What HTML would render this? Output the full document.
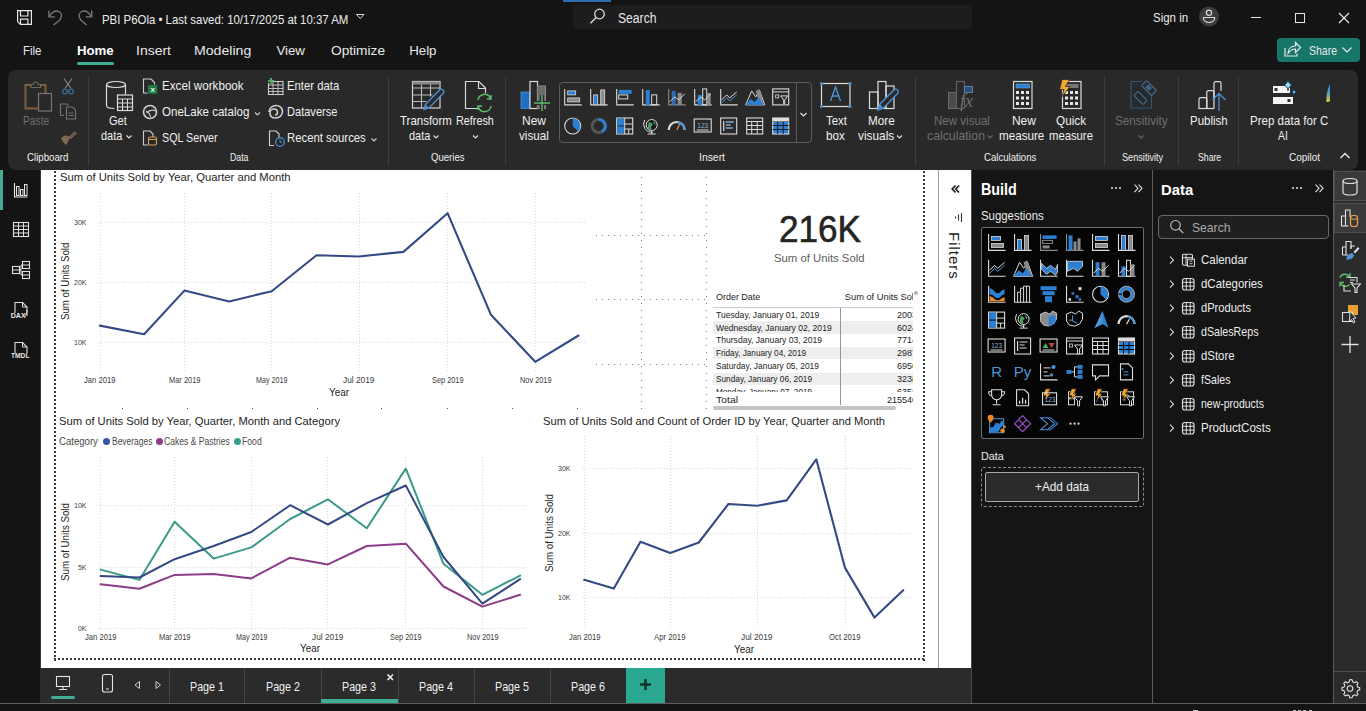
<!DOCTYPE html>
<html><head><meta charset="utf-8"><style>*{box-sizing:border-box;margin:0;padding:0}
html,body{width:1366px;height:711px;overflow:hidden;background:#141414;font-family:"Liberation Sans",sans-serif;color:#f2f2f2;position:relative;-webkit-font-smoothing:antialiased}
.a{position:absolute}
.t{position:absolute;white-space:pre;line-height:1}
svg{position:absolute;overflow:visible}
</style></head><body>
<svg style="left:10px;top:4px" width="90" height="26" viewBox="10 4 90 26"><path d="M17.6 10.6h13.8v13.8h-11l-2.8-2.8z" fill="none" stroke="#e6e6e6" stroke-width="1.2"/><path d="M20.5 10.6v5.4h7.4v-5.4M20.5 24.4v-5.2h7.4v5.2" fill="none" stroke="#e6e6e6" stroke-width="1.2"/>
<path d="M48.9 10.6v6.2h6" fill="none" stroke="#7a7a7a" stroke-width="1.3"/><path d="M49.3 16.4C51.5 13 54 11 56.5 11c3 0 5 2.2 5 4.8 0 1.8-.8 3-1.8 4.2L53.6 25" fill="none" stroke="#7a7a7a" stroke-width="1.3"/>
<path d="M91.7 10.6v6.2h-6" fill="none" stroke="#7a7a7a" stroke-width="1.3"/><path d="M91.3 16.4C89.1 13 86.6 11 84.1 11c-3 0-5 2.2-5 4.8 0 1.8.8 3 1.8 4.2L86.5 25" fill="none" stroke="#7a7a7a" stroke-width="1.3"/></svg>
<div class="t" style="left:102.3px;top:13.7px;font-size:12.86px;color:#ececec;transform:scaleX(0.8873);transform-origin:0 0;">PBI P6Ola • Last saved: 10/17/2025 at 10:37 AM</div>
<svg style="left:354px;top:12px" width="12" height="10" viewBox="354 12 12 10"><path d="M356.5 14.5h7.5l-3.75 4z" fill="none" stroke="#d8d8d8" stroke-width="1"/></svg>
<div class="a" style="left:563px;top:0px;width:48px;height:2px;background:#2f6db3;"></div>
<div class="a" style="left:573px;top:5px;width:399px;height:24px;background:#1d1d1d;border-radius:4px"></div>
<svg style="left:586px;top:6px" width="24" height="24" viewBox="586 6 24 24"><circle cx="599.5" cy="14" r="4.8" fill="none" stroke="#dcdcdc" stroke-width="1.3"/><path d="M596.2 17.5L590.5 23.2" stroke="#dcdcdc" stroke-width="1.4"/></svg>
<div class="t" style="left:618.4px;top:10.7px;font-size:14.29px;color:#e6e6e6;transform:scaleX(0.8508);transform-origin:0 0;">Search</div>
<div class="t" style="left:1153.2px;top:12.0px;font-size:12.86px;color:#ececec;transform:scaleX(0.8925);transform-origin:0 0;">Sign in</div>
<svg style="left:1197px;top:5px" width="24" height="24" viewBox="1197 5 24 24"><circle cx="1209" cy="16.5" r="10" fill="#3c3c3c"/><circle cx="1209" cy="12.8" r="2.6" fill="none" stroke="#dadada" stroke-width="1.2"/><path d="M1203.3 17.5h11.4c0 3-2.5 5-5.7 5s-5.7-2-5.7-5z" fill="none" stroke="#dadada" stroke-width="1.2"/></svg>
<div class="a" style="left:1251px;top:17px;width:10px;height:1px;background:#e6e6e6;"></div>
<div class="a" style="left:1295px;top:13px;width:10px;height:10px;background:transparent;border:1px solid #e6e6e6"></div>
<svg style="left:1336px;top:10px" width="16" height="16" viewBox="1336 10 16 16"><path d="M1339 13l10 10M1349 13l-10 10" stroke="#e6e6e6" stroke-width="1.2"/></svg>
<div class="t" style="left:23.4px;top:44.2px;font-size:13.29px;color:#e8e8e8;transform:scaleX(0.8642);transform-origin:0 0;">File</div>
<div class="t" style="left:77.3px;top:44.2px;font-size:13.29px;font-weight:700;color:#ffffff;transform:scaleX(0.9944);transform-origin:0 0;">Home</div>
<div class="t" style="left:136.2px;top:44.2px;font-size:13.29px;color:#e8e8e8;transform:scaleX(1.0536);transform-origin:0 0;">Insert</div>
<div class="t" style="left:194.3px;top:44.2px;font-size:13.29px;color:#e8e8e8;transform:scaleX(1.0630);transform-origin:0 0;">Modeling</div>
<div class="t" style="left:276.4px;top:44.2px;font-size:13.29px;color:#e8e8e8;">View</div>
<div class="t" style="left:330.6px;top:44.2px;font-size:13.29px;color:#e8e8e8;transform:scaleX(1.0304);transform-origin:0 0;">Optimize</div>
<div class="t" style="left:409.2px;top:44.2px;font-size:13.29px;color:#e8e8e8;">Help</div>
<div class="a" style="left:77px;top:62px;width:37px;height:3px;background:#3fae94;border-radius:1.5px"></div>
<div class="a" style="left:1277px;top:38px;width:83px;height:24px;background:#17766a;border-radius:4px"></div>
<svg style="left:1282px;top:40px" width="22" height="20" viewBox="1282 40 22 20"><path d="M1285 48v8h12v-2.5" fill="none" stroke="#e8e8e8" stroke-width="1.2"/><path d="M1288 53.5c0-4.5 3-7.5 7.5-7.5v-3.5l5 5-5 5v-3.5c-3.5 0-5.5 1.5-7.5 4.5z" fill="none" stroke="#e8e8e8" stroke-width="1.2"/></svg>
<div class="t" style="left:1308.5px;top:44.7px;font-size:12.86px;color:#e8e8e8;transform:scaleX(0.8157);transform-origin:0 0;">Share</div>
<svg style="left:1340px;top:44px" width="14" height="10" viewBox="1340 44 14 10"><path d="M1342.5 47.5l4.5 4.5 4.5-4.5" fill="none" stroke="#e8e8e8" stroke-width="1.2"/></svg>
<div class="a" style="left:0px;top:703px;width:1366px;height:1px;background:#5e5e5e;"></div>
<div class="a" style="left:8px;top:70px;width:1350px;height:99.5px;background:#292929;border-radius:8px"></div>
<div class="a" style="left:88px;top:77px;width:1px;height:88px;background:#3d3d3d;"></div>
<div class="a" style="left:388px;top:77px;width:1px;height:88px;background:#3d3d3d;"></div>
<div class="a" style="left:505px;top:77px;width:1px;height:88px;background:#3d3d3d;"></div>
<div class="a" style="left:915px;top:77px;width:1px;height:88px;background:#3d3d3d;"></div>
<div class="a" style="left:1104px;top:77px;width:1px;height:88px;background:#3d3d3d;"></div>
<div class="a" style="left:1178px;top:77px;width:1px;height:88px;background:#3d3d3d;"></div>
<div class="a" style="left:1238px;top:77px;width:1px;height:88px;background:#3d3d3d;"></div>
<div class="t" style="left:26.9px;top:152.4px;font-size:10.86px;color:#f0f0f0;transform:scaleX(0.8906);transform-origin:0 0;">Clipboard</div>
<div class="t" style="left:230.0px;top:152.4px;font-size:10.86px;color:#f0f0f0;transform:scaleX(0.8060);transform-origin:0 0;">Data</div>
<div class="t" style="left:430.8px;top:152.4px;font-size:10.86px;color:#f0f0f0;transform:scaleX(0.8809);transform-origin:0 0;">Queries</div>
<div class="t" style="left:698.5px;top:152.4px;font-size:10.86px;color:#f0f0f0;transform:scaleX(0.9569);transform-origin:0 0;">Insert</div>
<div class="t" style="left:983.8px;top:152.4px;font-size:10.86px;color:#f0f0f0;transform:scaleX(0.8841);transform-origin:0 0;">Calculations</div>
<div class="t" style="left:1121.5px;top:152.4px;font-size:10.86px;color:#f0f0f0;transform:scaleX(0.8427);transform-origin:0 0;">Sensitivity</div>
<div class="t" style="left:1197.7px;top:152.4px;font-size:10.86px;color:#f0f0f0;transform:scaleX(0.8004);transform-origin:0 0;">Share</div>
<div class="t" style="left:1288.8px;top:152.4px;font-size:10.86px;color:#f0f0f0;transform:scaleX(0.9168);transform-origin:0 0;">Copilot</div>
<svg style="left:20px;top:76px" width="40" height="40" viewBox="20 76 40 40"><path d="M31 85h-5.5v23.5h12.5M40 85h5.5v8" fill="none" stroke="#7d6034" stroke-width="2"/>
<path d="M31 87.5v-3h2.2c.3-1.6 1.2-2.5 2.5-2.5s2.2.9 2.5 2.5H40.5v3z" fill="none" stroke="#6f6a62" stroke-width="1.2"/>
<rect x="38.5" y="93.5" width="13" height="17.5" fill="#292929" stroke="#777" stroke-width="1.2"/></svg>
<div class="t" style="left:22.8px;top:114.7px;font-size:12.43px;color:#6f6f6f;transform:scaleX(0.8248);transform-origin:0 0;">Paste</div>
<svg style="left:58px;top:76px" width="20" height="72" viewBox="58 76 20 72"><path d="M64 78.5l7 10M72 78.5l-7 10" stroke="#8a8a8a" stroke-width="1.1"/>
<circle cx="65" cy="91.5" r="2.3" fill="none" stroke="#3e6a8c" stroke-width="1.3"/><circle cx="71" cy="91.5" r="2.3" fill="none" stroke="#3e6a8c" stroke-width="1.3"/>
<path d="M64 115.5h-3.5v-11.5h6.5l1.5 1.5" fill="none" stroke="#747474" stroke-width="1.1"/><path d="M66.5 107h6l3 3v9h-9z M68.5 113h5M68.5 115.5h5" fill="none" stroke="#747474" stroke-width="1.1"/>
<path d="M69.5 137.5l5-5.5 1.5 1.5-5.5 5z" fill="none" stroke="#7d6a52" stroke-width="1.2"/><path d="M61 138c3-3 6-3.5 9-1l-3.5 8c-2.5-1.5-4.5-4-5.5-7z" fill="#7d6a52"/></svg>
<svg style="left:100px;top:76px" width="40" height="40" viewBox="100 76 40 40"><ellipse cx="116" cy="84.5" rx="9.5" ry="3" fill="none" stroke="#dcdcdc" stroke-width="1.2"/>
<path d="M106.5 84.5v21c0 1.7 3.5 3 8 3" fill="none" stroke="#dcdcdc" stroke-width="1.2"/><path d="M125.5 84.5v10" fill="none" stroke="#dcdcdc" stroke-width="1.2"/>
<rect x="117.5" y="95" width="15" height="15.5" fill="#292929" stroke="#dcdcdc" stroke-width="1.2"/>
<path d="M117.5 99h15M117.5 103h15M117.5 107h15M122.5 99v11.5M127.5 99v11.5" stroke="#dcdcdc" stroke-width="1"/></svg>
<div class="t" style="left:108.6px;top:115.1px;font-size:12.86px;color:#f0f0f0;transform:scaleX(0.8537);transform-origin:0 0;">Get</div>
<div class="t" style="left:100.9px;top:130.1px;font-size:12.86px;color:#f0f0f0;transform:scaleX(0.8549);transform-origin:0 0;">data</div>
<svg style="left:124px;top:133px" width="10" height="8" viewBox="124 133 10 8"><path d="M126.5 135.5l2.5 2.5 2.5-2.5" fill="none" stroke="#e0e0e0" stroke-width="1.1"/></svg>
<svg style="left:140px;top:76px" width="22" height="74" viewBox="140 76 22 74"><path d="M151 79h-7.5v14h4M151 79l3.5 3.5v2" fill="none" stroke="#cfcfcf" stroke-width="1.1"/>
<rect x="148" y="85" width="9.3" height="8.8" fill="#1f7a45"/><text x="152.7" y="92.3" font-family="Liberation Sans" font-weight="bold" font-size="8" fill="#e8f5e8" text-anchor="middle">x</text>
<circle cx="150" cy="112" r="6.5" fill="none" stroke="#cfcfcf" stroke-width="1.6"/><path d="M146 111c2 1 4 3 4.5 6M146.5 113c3-3 6-3.5 9-2" fill="none" stroke="#cfcfcf" stroke-width="1.1"/>
<path d="M150 131h-6.5v14h4.5M150 131l3 3v3" fill="none" stroke="#cfcfcf" stroke-width="1.1"/><rect x="148.5" y="137" width="8" height="8" rx="1.5" fill="none" stroke="#d8a35c" stroke-width="1.1"/><path d="M148.5 139.5h8" stroke="#d8a35c" stroke-width="1"/></svg>
<div class="t" style="left:161.5px;top:80.1px;font-size:12.86px;color:#f0f0f0;transform:scaleX(0.9071);transform-origin:0 0;">Excel workbook</div>
<div class="t" style="left:161.5px;top:106.2px;font-size:12.86px;color:#f0f0f0;transform:scaleX(0.8989);transform-origin:0 0;">OneLake catalog</div>
<svg style="left:252px;top:110px" width="10" height="8" viewBox="252 110 10 8"><path d="M255 112.5l2.5 2.5 2.5-2.5" fill="none" stroke="#d0d0d0" stroke-width="1.1"/></svg>
<div class="t" style="left:161.5px;top:131.9px;font-size:12.86px;color:#f0f0f0;transform:scaleX(0.8335);transform-origin:0 0;">SQL Server</div>
<svg style="left:265px;top:76px" width="22" height="74" viewBox="265 76 22 74"><rect x="268.5" y="81.5" width="14.5" height="13" fill="none" stroke="#cfcfcf" stroke-width="1.1"/><path d="M268.5 85h14.5M268.5 88.5h14.5M268.5 91.5h14.5M273 81.5v13M278 81.5v13" stroke="#cfcfcf" stroke-width="0.9"/>
<path d="M271 78v6M268 81h6" stroke="#5bbf6a" stroke-width="1.3"/><rect x="268" y="80" width="4" height="3" fill="#292929"/><path d="M271 78v6M268 81h6" stroke="#5bbf6a" stroke-width="1.3"/>
<path d="M269 112c0-4 3.5-6.5 7-6.5s6.5 2.5 6.5 6-3 6.5-7 6.5-5.5-2.5-5.5-5 2-4 4-4 3.5 1.5 3.5 3.5-1.5 2.5-2.5 2.5" fill="none" stroke="#cfcfcf" stroke-width="1.6"/>
<path d="M276 131h-6.5v14.5h4.5M276 131l3 3v4" fill="none" stroke="#cfcfcf" stroke-width="1.1"/><circle cx="280" cy="142" r="4.3" fill="#292929" stroke="#4f93d1" stroke-width="1.2"/><path d="M280 139.5v2.7h2" fill="none" stroke="#4f93d1" stroke-width="1"/></svg>
<div class="t" style="left:287.0px;top:80.1px;font-size:12.86px;color:#f0f0f0;transform:scaleX(0.8796);transform-origin:0 0;">Enter data</div>
<div class="t" style="left:287.0px;top:106.2px;font-size:12.86px;color:#f0f0f0;transform:scaleX(0.8599);transform-origin:0 0;">Dataverse</div>
<div class="t" style="left:287.0px;top:131.9px;font-size:12.86px;color:#f0f0f0;transform:scaleX(0.8818);transform-origin:0 0;">Recent sources</div>
<svg style="left:368px;top:136px" width="10" height="8" viewBox="368 136 10 8"><path d="M371.5 138.5l2.5 2.5 2.5-2.5" fill="none" stroke="#d0d0d0" stroke-width="1.1"/></svg>
<svg style="left:408px;top:78px" width="40" height="36" viewBox="408 78 40 36"><rect x="412.5" y="81.5" width="27.5" height="26.5" fill="none" stroke="#d8d8d8" stroke-width="1.2"/><rect x="412.5" y="81.5" width="27.5" height="3" fill="#8a8a8a"/>
<path d="M412.5 88h27.5M412.5 95h20M412.5 101.5h14M421.5 84.5v23.5M430.5 84.5v12" stroke="#bdbdbd" stroke-width="1.1"/>
<path d="M424 109.5l1.5-5 14-14.5c1-1 2.5-1 3.5 0s1 2.5 0 3.5l-14 14.5z" fill="#292929" stroke="#4f8fd0" stroke-width="1.4"/><path d="M424 109.5l1.5-5 3.5 3.5z" fill="#4f8fd0"/></svg>
<div class="t" style="left:399.5px;top:115.1px;font-size:12.86px;color:#f0f0f0;transform:scaleX(0.8929);transform-origin:0 0;">Transform</div>
<div class="t" style="left:408.9px;top:130.1px;font-size:12.86px;color:#f0f0f0;transform:scaleX(0.8509);transform-origin:0 0;">data</div>
<svg style="left:430px;top:133px" width="10" height="8" viewBox="430 133 10 8"><path d="M433.5 135.5l2.5 2.5 2.5-2.5" fill="none" stroke="#e0e0e0" stroke-width="1.1"/></svg>
<svg style="left:462px;top:78px" width="32" height="36" viewBox="462 78 32 36"><path d="M479 108.5h-13.5v-27h13.5l6.5 6.5v5" fill="none" stroke="#d8d8d8" stroke-width="1.2"/><path d="M478.5 81.5v7h7" fill="none" stroke="#d8d8d8" stroke-width="1.2"/>
<path d="M478 100a6.5 6.5 0 0 1 12.5-1.5M491 106a6.5 6.5 0 0 1-12.5 1.5" fill="none" stroke="#5cc06e" stroke-width="1.5"/><path d="M491 95v4h-4M478 110v-4h4" fill="none" stroke="#5cc06e" stroke-width="1.5"/></svg>
<div class="t" style="left:456.4px;top:115.1px;font-size:12.86px;color:#f0f0f0;transform:scaleX(0.8394);transform-origin:0 0;">Refresh</div>
<svg style="left:470px;top:133px" width="10" height="8" viewBox="470 133 10 8"><path d="M473 135.5l2.5 2.5 2.5-2.5" fill="none" stroke="#e0e0e0" stroke-width="1.1"/></svg>
<svg style="left:518px;top:78px" width="36" height="36" viewBox="518 78 36 36"><rect x="521" y="92" width="8.5" height="16.5" fill="#1f6fc5" stroke="#4f8fd0" stroke-width="0.8"/><rect x="530" y="81.5" width="7.5" height="27" fill="none" stroke="#dcdcdc" stroke-width="1.2"/>
<rect x="537.5" y="86" width="8" height="22.5" fill="#6a6a6a" stroke="#8a8a8a" stroke-width="1"/><path d="M534 103h16M542 95v16" stroke="#292929" stroke-width="4"/><path d="M534 103h16M542 95v16" stroke="#5cc06e" stroke-width="1.4"/></svg>
<div class="t" style="left:522.0px;top:115.1px;font-size:12.86px;color:#f0f0f0;transform:scaleX(0.9326);transform-origin:0 0;">New</div>
<div class="t" style="left:519.2px;top:130.1px;font-size:12.86px;color:#f0f0f0;transform:scaleX(0.9060);transform-origin:0 0;">visual</div>
<div class="a" style="left:558.5px;top:81.5px;width:253.5px;height:61px;background:transparent;border:1px solid #5c5c5c;border-radius:4px"></div>
<div class="a" style="left:795.5px;top:82px;width:1px;height:60px;background:#5c5c5c;"></div>
<svg style="left:798px;top:111px" width="12" height="8" viewBox="798 111 12 8"><path d="M800.5 113l3 3 3-3" fill="none" stroke="#e0e0e0" stroke-width="1.2"/></svg>
<svg style="left:560px;top:83px" width="236" height="58" viewBox="560 83 236 58"><path d="M564.7 88.9v16h17" fill="none" stroke="#dcdcdc" stroke-width="1.1"/><rect x="567.7" y="90.9" width="8" height="4" fill="#2d7fd2" stroke="#dcdcdc" stroke-width="0.8"/><rect x="567.7" y="97.9" width="12" height="4" fill="#8a8a8a" stroke="#dcdcdc" stroke-width="0.8"/><path d="M590.7 88.9v16h17" fill="none" stroke="#dcdcdc" stroke-width="1.1"/><rect x="593.7" y="94.9" width="4" height="10" fill="#2d7fd2" stroke="#dcdcdc" stroke-width="0.8"/><rect x="600.7" y="89.9" width="4" height="15" fill="#8a8a8a" stroke="#dcdcdc" stroke-width="0.8"/><path d="M616.7 88.9v16h17" fill="none" stroke="#dcdcdc" stroke-width="1.1"/><rect x="618.7" y="89.9" width="13" height="4" fill="#2d7fd2"/><rect x="618.7" y="94.9" width="9" height="4" fill="none" stroke="#dcdcdc" stroke-width="1"/><path d="M642.7 88.9v16h17" fill="none" stroke="#dcdcdc" stroke-width="1.1"/><rect x="645.7" y="89.9" width="4" height="15" fill="#2d7fd2"/><rect x="651.7" y="94.9" width="5" height="10" fill="none" stroke="#dcdcdc" stroke-width="1"/><path d="M668.7 88.9v16h17" fill="none" stroke="#8a8a8a" stroke-width="1.1"/><rect x="671.7" y="90.9" width="4" height="14" fill="#2d7fd2" opacity=".8"/><rect x="677.7" y="92.9" width="4" height="12" fill="#8a8a8a"/><path d="M669.7 101.9l5-5 4 3 6-6" fill="none" stroke="#dcdcdc" stroke-width="1"/><path d="M694.7 88.9v16h17" fill="none" stroke="#dcdcdc" stroke-width="1.1"/><rect x="697.7" y="94.9" width="4" height="10" fill="#2d7fd2"/><rect x="702.7" y="88.9" width="4" height="16" fill="none" stroke="#dcdcdc" stroke-width="1"/><rect x="706.7" y="92.9" width="4" height="12" fill="#8a8a8a"/><path d="M695.7 101.9l5-5 4 3 6-6" fill="none" stroke="#dcdcdc" stroke-width="1"/><path d="M720.7 88.9v16h17" fill="none" stroke="#dcdcdc" stroke-width="1.1"/><path d="M721.7 99.9l5-5 3 3 7-6" fill="none" stroke="#dcdcdc" stroke-width="1"/><path d="M721.7 102.9l5-5 3 3 7-6" fill="none" stroke="#4f93d1" stroke-width="1"/><path d="M745.7 104.9l6-14 4 6 4-6 5 14z" fill="none" stroke="#dcdcdc" stroke-width="1"/><path d="M755.7 90.9l4-2 4 16h-4z" fill="#8a8a8a"/><path d="M745.7 104.9l5-6 4 3 4-5 5 8z" fill="#2d7fd2"/><rect x="772.7" y="88.9" width="16" height="16" fill="none" stroke="#dcdcdc" stroke-width="1.1"/><path d="M772.7 91.9h16" stroke="#dcdcdc" stroke-width="1"/><rect x="775.7" y="94.9" width="3" height="3" fill="none" stroke="#dcdcdc" stroke-width=".8"/><path d="M780.7 95.9h7l-3 4v4h-1v-4z" fill="#292929" stroke="#dcdcdc" stroke-width="1"/><circle cx="572.7" cy="126" r="8" fill="none" stroke="#dcdcdc" stroke-width="1.1"/><path d="M572.7 118.5A7.5 7.5 0 0 1 578.0 131.3L572.7 126z" fill="#2d7fd2"/><circle cx="598.7" cy="126" r="6.5" fill="none" stroke="#555" stroke-width="3"/><path d="M598.7 119.5A6.5 6.5 0 0 1 601.7 131.8" fill="none" stroke="#2d7fd2" stroke-width="3"/><rect x="616.7" y="118" width="16" height="16" fill="none" stroke="#dcdcdc" stroke-width="1.1"/><rect x="617.2" y="118.5" width="7" height="7" fill="#2d7fd2"/><rect x="617.2" y="126.5" width="7" height="7" fill="#2d7fd2"/><path d="M624.7 118v16M624.7 124h8M624.7 129h8M628.7 129v5" stroke="#dcdcdc" stroke-width="1"/><circle cx="651.7" cy="125" r="5.5" fill="#1a1a1a" stroke="#dcdcdc" stroke-width="1"/><path d="M648.7 122l3 1 1 2-2 2 1 2-2 1-2-2z M652.7 121l3 2-1 2z" fill="#4aa060"/><path d="M644.7 120a8 8 0 0 0 8 12M651.7 131v3M647.7 134h8" fill="none" stroke="#dcdcdc" stroke-width="1"/><path d="M668.7 130a8 8 0 0 1 16 0" fill="none" stroke="#dcdcdc" stroke-width="2.2"/><path d="M677.7 122.2a8 8 0 0 1 7 7.8" fill="none" stroke="#4f93d1" stroke-width="2.2"/><path d="M676.7 130l3-6" stroke="#e0a040" stroke-width="1.2"/><rect x="694.2" y="119" width="17" height="13" fill="none" stroke="#dcdcdc" stroke-width="1.1"/><path d="M696.7 130h12" stroke="#dcdcdc" stroke-width="1"/><text x="702.7" y="127.5" font-family="Liberation Sans" font-size="6.5" fill="#8fb4dc" text-anchor="middle">123</text><rect x="720.7" y="118" width="16" height="16" fill="none" stroke="#dcdcdc" stroke-width="1.1"/><path d="M723.7 121v10M725.7 122h8M725.7 125h5M725.7 128h7" stroke="#dcdcdc" stroke-width="1.2"/><path d="M725.7 122h8M725.7 128h7" stroke="#4f93d1" stroke-width="1.2"/><rect x="746.7" y="118" width="16" height="16" fill="none" stroke="#dcdcdc" stroke-width="1.1"/><path d="M746.7 121.5h16M746.7 125.5h16M746.7 129.5h16M751.7 121.5v12.5M757.2 121.5v12.5" stroke="#dcdcdc" stroke-width="1"/><rect x="772.7" y="118" width="16" height="16" fill="#2d7fd2" stroke="#dcdcdc" stroke-width="1.1"/><path d="M772.7 121.5h16M772.7 125.5h16M772.7 129.5h16M777.7 121.5v12.5M783.2 121.5v12.5" stroke="#1a1a1a" stroke-width="1"/><rect x="772.7" y="118" width="16" height="3.5" fill="#dcdcdc"/></svg>
<svg style="left:818px;top:78px" width="36" height="36" viewBox="818 78 36 36"><rect x="821.5" y="83.5" width="28.5" height="23" fill="none" stroke="#dcdcdc" stroke-width="1.2"/>
<circle cx="821.5" cy="83.5" r="1.6" fill="#4f8fd0"/><circle cx="850" cy="83.5" r="1.6" fill="#4f8fd0"/><circle cx="821.5" cy="106.5" r="1.6" fill="#4f8fd0"/><circle cx="850" cy="106.5" r="1.6" fill="#4f8fd0"/>
<path d="M830.5 101l5-14 5 14M832.5 96h6" fill="none" stroke="#4f93d1" stroke-width="1.4"/></svg>
<div class="t" style="left:826.4px;top:115.1px;font-size:12.86px;color:#f0f0f0;transform:scaleX(0.8858);transform-origin:0 0;">Text</div>
<div class="t" style="left:826.4px;top:130.1px;font-size:12.86px;color:#f0f0f0;transform:scaleX(0.9067);transform-origin:0 0;">box</div>
<svg style="left:866px;top:78px" width="36" height="36" viewBox="866 78 36 36"><rect x="869.5" y="92" width="8.5" height="16.5" fill="none" stroke="#dcdcdc" stroke-width="1.2"/><rect x="878" y="81.5" width="8" height="27" fill="none" stroke="#dcdcdc" stroke-width="1.2"/><rect x="886" y="86" width="8" height="22.5" fill="none" stroke="#dcdcdc" stroke-width="1.2"/>
<path d="M878 110l2-6 14-14c1-1 2.5-1 3.5 0s1 2.5 0 3.5L883.5 108z" fill="#292929" stroke="#4f8fd0" stroke-width="1.4"/><path d="M878 110l2-6 3.5 4z" fill="#4f8fd0"/></svg>
<div class="t" style="left:868.4px;top:115.1px;font-size:12.86px;color:#f0f0f0;transform:scaleX(0.9109);transform-origin:0 0;">More</div>
<div class="t" style="left:858.0px;top:130.1px;font-size:12.86px;color:#f0f0f0;transform:scaleX(0.9208);transform-origin:0 0;">visuals</div>
<svg style="left:894px;top:133px" width="10" height="8" viewBox="894 133 10 8"><path d="M897 135.5l2.5 2.5 2.5-2.5" fill="none" stroke="#e0e0e0" stroke-width="1.1"/></svg>
<svg style="left:945px;top:78px" width="36" height="36" viewBox="945 78 36 36"><rect x="948.5" y="92.5" width="8" height="16" fill="#4a4a4a" stroke="#6a6a6a" stroke-width="1"/><rect x="956.5" y="81.5" width="8" height="27" fill="none" stroke="#626262" stroke-width="1.2"/><rect x="964.5" y="86.5" width="8" height="6" fill="#2a4f78" stroke="#5a80a8" stroke-width="1"/>
<text x="960" y="107" font-family="Liberation Serif" font-style="italic" font-size="18" fill="#707070" stroke="#292929" stroke-width="0.6" paint-order="stroke">fx</text></svg>
<div class="t" style="left:933.5px;top:115.1px;font-size:12.86px;color:#6f6f6f;transform:scaleX(0.8989);transform-origin:0 0;">New visual</div>
<div class="t" style="left:926.6px;top:130.1px;font-size:12.86px;color:#6f6f6f;transform:scaleX(0.9545);transform-origin:0 0;">calculation</div>
<svg style="left:985px;top:133px" width="10" height="8" viewBox="985 133 10 8"><path d="M987.5 135.5l2.5 2.5 2.5-2.5" fill="none" stroke="#6a6a6a" stroke-width="1.1"/></svg>
<svg style="left:1010px;top:78px" width="80" height="36" viewBox="1010 78 80 36"><rect x="1013.5" y="81.5" width="18.5" height="27" fill="none" stroke="#dcdcdc" stroke-width="1.2"/><rect x="1016" y="84" width="13.5" height="4" fill="#2d7fd2" stroke="#6aa8e4" stroke-width="0.6"/>
<g fill="#e6e6e6"><rect x="1016" y="91" width="3" height="3"/><rect x="1021" y="91" width="3" height="3"/><rect x="1026" y="91" width="3" height="3"/><rect x="1016" y="96.5" width="3" height="3"/><rect x="1021" y="96.5" width="3" height="3"/><rect x="1026" y="96.5" width="3" height="3"/><rect x="1016" y="102" width="3" height="3"/><rect x="1021" y="102" width="3" height="3"/><rect x="1026" y="102" width="3" height="3"/></g>
<rect x="1062.5" y="81.5" width="18.5" height="27" fill="none" stroke="#dcdcdc" stroke-width="1.2"/><rect x="1065" y="84" width="13.5" height="4" fill="#777"/>
<g fill="#e6e6e6"><rect x="1065" y="91" width="3" height="3"/><rect x="1070" y="91" width="3" height="3"/><rect x="1075" y="91" width="3" height="3"/><rect x="1065" y="96.5" width="3" height="3"/><rect x="1070" y="96.5" width="3" height="3"/><rect x="1075" y="96.5" width="3" height="3"/><rect x="1065" y="102" width="3" height="3"/><rect x="1070" y="102" width="3" height="3"/><rect x="1075" y="102" width="3" height="3"/></g>
<path d="M1062 79.5h7.5l-4 7h4.5l-8.5 11 2.5-8h-4.5z" fill="#f0a830" stroke="#292929" stroke-width="0.8"/></svg>
<div class="t" style="left:1011.5px;top:115.1px;font-size:12.86px;color:#f0f0f0;transform:scaleX(0.9287);transform-origin:0 0;">New</div>
<div class="t" style="left:999.0px;top:130.1px;font-size:12.86px;color:#f0f0f0;transform:scaleX(0.9054);transform-origin:0 0;">measure</div>
<div class="t" style="left:1056.4px;top:115.1px;font-size:12.86px;color:#f0f0f0;transform:scaleX(0.9125);transform-origin:0 0;">Quick</div>
<div class="t" style="left:1049.3px;top:130.1px;font-size:12.86px;color:#f0f0f0;transform:scaleX(0.8775);transform-origin:0 0;">measure</div>
<svg style="left:1128px;top:76px" width="36" height="36" viewBox="1128 76 36 36"><path d="M1142 81.5h-11v26.5h20.5v-14" fill="none" stroke="#2f5878" stroke-width="1.2"/>
<rect x="1134" y="95" width="13" height="6" rx="1.5" transform="rotate(45 1140.5 98)" fill="none" stroke="#3d6a8e" stroke-width="1.2"/>
<rect x="1142" y="84.5" width="14" height="7" rx="1" transform="rotate(45 1149 88)" fill="#292929" stroke="#3d6a8e" stroke-width="1.2"/><rect x="1146" y="86" width="5" height="4" transform="rotate(45 1149 88)" fill="#3d6a8e"/></svg>
<div class="t" style="left:1115.4px;top:115.1px;font-size:12.86px;color:#6f6f6f;transform:scaleX(0.9103);transform-origin:0 0;">Sensitivity</div>
<svg style="left:1136px;top:133px" width="10" height="8" viewBox="1136 133 10 8"><path d="M1138.5 135.5l2.5 2.5 2.5-2.5" fill="none" stroke="#6a6a6a" stroke-width="1.1"/></svg>
<svg style="left:1195px;top:78px" width="36" height="36" viewBox="1195 78 36 36"><path d="M1199 108.5v-9c0-1 .8-1.8 1.8-1.8h4.2c1 0 1.8.8 1.8 1.8v9z" fill="none" stroke="#dcdcdc" stroke-width="1.2"/>
<path d="M1206.8 108.5v-16c0-1 .8-1.8 1.8-1.8h3.6c1 0 1.8.8 1.8 1.8v16" fill="none" stroke="#dcdcdc" stroke-width="1.2"/>
<path d="M1214 98v-14.5c0-1 .8-1.8 1.8-1.8h3.4c1 0 1.8.8 1.8 1.8v7.5" fill="none" stroke="#dcdcdc" stroke-width="1.2"/><path d="M1199 108.5h15" stroke="#dcdcdc" stroke-width="1.2"/>
<path d="M1219 111v-17M1212.5 100l6.5-6.5 6.5 6.5" fill="none" stroke="#4f8fd0" stroke-width="1.3"/></svg>
<div class="t" style="left:1189.7px;top:115.1px;font-size:12.86px;color:#f0f0f0;transform:scaleX(0.8936);transform-origin:0 0;">Publish</div>
<svg style="left:1270px;top:78px" width="36" height="30" viewBox="1270 78 36 30"><rect x="1273" y="86" width="17" height="7" fill="#f4f4f4"/><rect x="1273" y="97" width="20" height="7" fill="#f4f4f4"/><rect x="1274.5" y="88" width="3" height="3" fill="#333"/><rect x="1287.5" y="99" width="3" height="3" fill="#333"/>
<path d="M1288 79.5c.6 3.3 1.8 4.8 5 5.5-3.2.7-4.4 2.2-5 5.5-.6-3.3-1.8-4.8-5-5.5 3.2-.7 4.4-2.2 5-5.5z" fill="#9ad8f8" stroke="#0e3550" stroke-width="1"/><path d="M1294 89c.4 1.8 1 2.5 2.6 2.9-1.6.4-2.2 1.1-2.6 2.9-.4-1.8-1-2.5-2.6-2.9 1.6-.4 2.2-1.1 2.6-2.9z" fill="#6ec0f2" stroke="#0e3550" stroke-width=".8"/></svg>
<div class="t" style="left:1249.9px;top:115.1px;font-size:12.86px;color:#f0f0f0;transform:scaleX(0.8979);transform-origin:0 0;">Prep data for C</div>
<div class="t" style="left:1278.3px;top:130.1px;font-size:12.86px;color:#f0f0f0;transform:scaleX(0.8062);transform-origin:0 0;">AI</div>
<svg style="left:1322px;top:82px" width="12" height="22" viewBox="1322 82 12 22"><defs><linearGradient id="cp" x1="0" y1="0" x2="0" y2="1"><stop offset="0" stop-color="#2f8de0"/><stop offset="0.5" stop-color="#4aa0c0"/><stop offset="1" stop-color="#e8d030"/></linearGradient></defs><path d="M1330 84c-2 4-4 10-3.5 18 1.5 0 3 -.5 3.5-1z" fill="url(#cp)"/></svg>
<svg style="left:1338px;top:151px" width="14" height="10" viewBox="1338 151 14 10"><path d="M1340.5 158l4.5-4.5 4.5 4.5" fill="none" stroke="#e6e6e6" stroke-width="1.5"/></svg>
<div class="a" style="left:40px;top:170px;width:899px;height:498px;background:#ffffff;"></div>
<div class="a" style="left:40px;top:170px;width:1px;height:498px;background:#3a3a3a;"></div>
<div class="a" style="left:938px;top:170px;width:1px;height:498px;background:#a0a0a0;"></div>
<div class="a" style="left:939px;top:170px;width:32px;height:498px;background:#ffffff;"></div>
<div class="t" style="left:59.5px;top:172.0px;font-size:10.86px;color:#252423;transform:scaleX(1.0352);transform-origin:0 0;">Sum of Units Sold by Year, Quarter and Month</div>
<div class="a" style="left:98px;top:222px;width:489px;height:1px;background:repeating-linear-gradient(90deg,#d9d9d9 0 1px,transparent 1px 3px)"></div>
<div class="a" style="left:98px;top:282px;width:489px;height:1px;background:repeating-linear-gradient(90deg,#d9d9d9 0 1px,transparent 1px 3px)"></div>
<div class="a" style="left:98px;top:342px;width:489px;height:1px;background:repeating-linear-gradient(90deg,#d9d9d9 0 1px,transparent 1px 3px)"></div>
<div class="a" style="left:100px;top:193px;width:1px;height:180px;background:repeating-linear-gradient(180deg,#d9d9d9 0 1px,transparent 1px 3px)"></div>
<div class="a" style="left:184px;top:193px;width:1px;height:180px;background:repeating-linear-gradient(180deg,#d9d9d9 0 1px,transparent 1px 3px)"></div>
<div class="a" style="left:271px;top:193px;width:1px;height:180px;background:repeating-linear-gradient(180deg,#d9d9d9 0 1px,transparent 1px 3px)"></div>
<div class="a" style="left:359px;top:193px;width:1px;height:180px;background:repeating-linear-gradient(180deg,#d9d9d9 0 1px,transparent 1px 3px)"></div>
<div class="a" style="left:447px;top:193px;width:1px;height:180px;background:repeating-linear-gradient(180deg,#d9d9d9 0 1px,transparent 1px 3px)"></div>
<div class="a" style="left:535px;top:193px;width:1px;height:180px;background:repeating-linear-gradient(180deg,#d9d9d9 0 1px,transparent 1px 3px)"></div>
<div class="t" style="left:73.5px;top:218.7px;font-size:8.0px;color:#3c3c3c;transform:scaleX(0.8782);transform-origin:0 0;">30K</div>
<div class="t" style="left:73.5px;top:278.7px;font-size:8.0px;color:#3c3c3c;transform:scaleX(0.8782);transform-origin:0 0;">20K</div>
<div class="t" style="left:73.5px;top:339.1px;font-size:8.0px;color:#3c3c3c;transform:scaleX(0.8782);transform-origin:0 0;">10K</div>
<div class="t" style="left:84.2px;top:375.8px;font-size:8.57px;color:#3c3c3c;transform:scaleX(0.8940);transform-origin:0 0;">Jan 2019</div>
<div class="t" style="left:168.6px;top:375.8px;font-size:8.57px;color:#3c3c3c;transform:scaleX(0.8705);transform-origin:0 0;">Mar 2019</div>
<div class="t" style="left:256.0px;top:375.8px;font-size:8.57px;color:#3c3c3c;transform:scaleX(0.8376);transform-origin:0 0;">May 2019</div>
<div class="t" style="left:343.3px;top:375.8px;font-size:8.57px;color:#3c3c3c;transform:scaleX(0.9730);transform-origin:0 0;">Jul 2019</div>
<div class="t" style="left:432.1px;top:375.8px;font-size:8.57px;color:#3c3c3c;transform:scaleX(0.8590);transform-origin:0 0;">Sep 2019</div>
<div class="t" style="left:519.5px;top:375.8px;font-size:8.57px;color:#3c3c3c;transform:scaleX(0.8593);transform-origin:0 0;">Nov 2019</div>
<div class="t" style="left:329.0px;top:387.1px;font-size:11.43px;color:#252423;transform:scaleX(0.8666);transform-origin:0 0;">Year</div>
<div class="t" style="left:60.8px;top:320.0px;font-size:10.0px;color:#252423;transform:rotate(-90deg) scaleX(0.967);transform-origin:0 0;">Sum of Units Sold</div>
<svg style="left:40px;top:170px" width="899" height="498" viewBox="40 170 899 498"><polyline points="99.9,325.6 144.1,334.2 184.4,290.6 229.2,301.4 271.7,291.2 316.5,255.3 358.8,256.5 403.4,251.9 447.6,213.2 490.9,314.7 535.2,361.8 578.5,335.5" fill="none" stroke="#354a85" stroke-width="2.1" stroke-linejoin="round" stroke-linecap="round"/></svg>
<div class="a" style="left:641px;top:177px;width:1px;height:234px;background:repeating-linear-gradient(180deg,#7a7a7a 0 1px,transparent 1px 7px)"></div>
<div class="a" style="left:706px;top:177px;width:1px;height:234px;background:repeating-linear-gradient(180deg,#7a7a7a 0 1px,transparent 1px 7px)"></div>
<div class="a" style="left:596px;top:235px;width:110px;height:1px;background:repeating-linear-gradient(90deg,#7a7a7a 0 1px,transparent 1px 6px)"></div>
<div class="a" style="left:596px;top:299px;width:110px;height:1px;background:repeating-linear-gradient(90deg,#7a7a7a 0 1px,transparent 1px 6px)"></div>
<div class="a" style="left:596px;top:364px;width:110px;height:1px;background:repeating-linear-gradient(90deg,#7a7a7a 0 1px,transparent 1px 6px)"></div>
<div class="a" style="left:121.5px;top:408px;width:1px;height:1px;background:#555;"></div>
<div class="a" style="left:186.5px;top:408px;width:1px;height:1px;background:#555;"></div>
<div class="a" style="left:251.5px;top:408px;width:1px;height:1px;background:#555;"></div>
<div class="a" style="left:316.5px;top:408px;width:1px;height:1px;background:#555;"></div>
<div class="a" style="left:381px;top:408px;width:1px;height:1px;background:#555;"></div>
<div class="a" style="left:447px;top:408px;width:1px;height:1px;background:#555;"></div>
<div class="a" style="left:512px;top:408px;width:1px;height:1px;background:#555;"></div>
<div class="a" style="left:577px;top:408px;width:1px;height:1px;background:#555;"></div>
<div class="t" style="left:778.8px;top:212.1px;font-size:36.14px;color:#252423;transform:scaleX(0.9719);transform-origin:0 0;-webkit-text-stroke:0.6px #252423;">216K</div>
<div class="t" style="left:773.9px;top:252.9px;font-size:11.43px;color:#605e5c;transform:scaleX(0.9899);transform-origin:0 0;">Sum of Units Sold</div>
<div class="t" style="left:716.3px;top:292.9px;font-size:9.29px;color:#252423;transform:scaleX(0.9647);transform-origin:0 0;">Order Date</div>
<div class="a" style="left:713px;top:285px;width:200px;height:30px;overflow:hidden">
</div>
<div class="a" style="left:841px;top:288px;width:72px;height:16px;overflow:hidden">
<div class="t" style="left:3.8px;top:4.9px;font-size:9.29px;color:#252423;">Sum of Units Sold</div>
</div>
<div class="a" style="left:913.5px;top:290.5px;width:4px;height:4px;background:#b0b0b0;border-radius:50%"></div>
<div class="a" style="left:713px;top:307px;width:200px;height:1.2px;background:#c5cbd6;"></div>
<div class="a" style="left:713px;top:321px;width:200px;height:12.6px;background:#eeeeee;"></div>
<div class="a" style="left:713px;top:346.8px;width:200px;height:12.6px;background:#eeeeee;"></div>
<div class="a" style="left:713px;top:372.5px;width:200px;height:12.6px;background:#eeeeee;"></div>
<div class="a" style="left:840px;top:308px;width:1px;height:97px;background:#8797ad;"></div>
<div class="t" style="left:715.6px;top:311.0px;font-size:9.14px;color:#252423;transform:scaleX(0.9436);transform-origin:0 0;">Tuesday, January 01, 2019</div>
<div class="t" style="left:715.6px;top:323.7px;font-size:9.14px;color:#252423;transform:scaleX(0.9411);transform-origin:0 0;">Wednesday, January 02, 2019</div>
<div class="t" style="left:715.6px;top:336.4px;font-size:9.14px;color:#252423;transform:scaleX(0.9384);transform-origin:0 0;">Thursday, January 03, 2019</div>
<div class="t" style="left:715.6px;top:349.1px;font-size:9.14px;color:#252423;transform:scaleX(0.8976);transform-origin:0 0;">Friday, January 04, 2019</div>
<div class="t" style="left:715.6px;top:361.8px;font-size:9.14px;color:#252423;transform:scaleX(0.9243);transform-origin:0 0;">Saturday, January 05, 2019</div>
<div class="t" style="left:715.6px;top:374.6px;font-size:9.14px;color:#252423;transform:scaleX(0.9069);transform-origin:0 0;">Sunday, January 06, 2019</div>
<div class="a" style="left:713px;top:386px;width:127px;height:5.5px;overflow:hidden">
<div class="t" style="left:2.6px;top:1.5px;font-size:9.14px;color:#252423;transform:scaleX(0.8941);transform-origin:0 0;">Monday, January 07, 2019</div>
</div>
<div class="t" style="left:716.0px;top:394.6px;font-size:9.43px;color:#252423;transform:scaleX(1.1052);transform-origin:0 0;">Total</div>
<div class="a" style="left:841px;top:308px;width:72px;height:97px;overflow:hidden">
<div class="t" style="left:56.0px;top:3.0px;font-size:9.14px;color:#252423;transform:scaleX(0.9846);transform-origin:0 0;">2003</div>
<div class="t" style="left:56.0px;top:15.7px;font-size:9.14px;color:#252423;transform:scaleX(0.9846);transform-origin:0 0;">6024</div>
<div class="t" style="left:56.0px;top:28.4px;font-size:9.14px;color:#252423;transform:scaleX(0.9846);transform-origin:0 0;">7714</div>
<div class="t" style="left:56.0px;top:41.1px;font-size:9.14px;color:#252423;transform:scaleX(0.9846);transform-origin:0 0;">2987</div>
<div class="t" style="left:56.0px;top:53.8px;font-size:9.14px;color:#252423;transform:scaleX(0.9846);transform-origin:0 0;">6956</div>
<div class="t" style="left:56.0px;top:66.6px;font-size:9.14px;color:#252423;transform:scaleX(0.9846);transform-origin:0 0;">3238</div>
<div class="a" style="left:0;top:78px;width:72px;height:5.5px;overflow:hidden">
<div class="t" style="left:56.0px;top:1.5px;font-size:9.14px;color:#252423;transform:scaleX(0.9846);transform-origin:0 0;">6358</div>
</div>
<div class="t" style="left:46.0px;top:86.6px;font-size:9.43px;color:#252423;transform:scaleX(0.9538);transform-origin:0 0;">215540</div>
</div>
<div class="a" style="left:713px;top:406.3px;width:183px;height:4px;background:#c4c4c4;border-radius:2px"></div>
<div class="t" style="left:59.1px;top:416.4px;font-size:10.86px;color:#252423;transform:scaleX(1.0321);transform-origin:0 0;">Sum of Units Sold by Year, Quarter, Month and Category</div>
<div class="t" style="left:59.0px;top:436.5px;font-size:10.0px;color:#4c4a48;transform:scaleX(0.9586);transform-origin:0 0;">Category</div>
<div class="a" style="left:103.10000000000001px;top:437.6px;width:7.2px;height:7.2px;background:#3a55a8;border-radius:50%"></div>
<div class="a" style="left:155.70000000000002px;top:437.6px;width:7.2px;height:7.2px;background:#8e3f8c;border-radius:50%"></div>
<div class="a" style="left:233.8px;top:437.6px;width:7.2px;height:7.2px;background:#3aa08e;border-radius:50%"></div>
<div class="t" style="left:111.6px;top:436.5px;font-size:10.0px;color:#4c4a48;transform:scaleX(0.8450);transform-origin:0 0;">Beverages</div>
<div class="t" style="left:164.3px;top:436.5px;font-size:10.0px;color:#4c4a48;transform:scaleX(0.8565);transform-origin:0 0;">Cakes &amp; Pastries</div>
<div class="t" style="left:242.3px;top:436.5px;font-size:10.0px;color:#4c4a48;transform:scaleX(0.8642);transform-origin:0 0;">Food</div>
<div class="a" style="left:99px;top:505px;width:428px;height:1px;background:repeating-linear-gradient(90deg,#d9d9d9 0 1px,transparent 1px 3px)"></div>
<div class="a" style="left:99px;top:567px;width:428px;height:1px;background:repeating-linear-gradient(90deg,#d9d9d9 0 1px,transparent 1px 3px)"></div>
<div class="a" style="left:99px;top:628px;width:428px;height:1px;background:repeating-linear-gradient(90deg,#d9d9d9 0 1px,transparent 1px 3px)"></div>
<div class="a" style="left:100px;top:456.6px;width:1px;height:172.39999999999998px;background:repeating-linear-gradient(180deg,#d9d9d9 0 1px,transparent 1px 3px)"></div>
<div class="a" style="left:174px;top:456.6px;width:1px;height:172.39999999999998px;background:repeating-linear-gradient(180deg,#d9d9d9 0 1px,transparent 1px 3px)"></div>
<div class="a" style="left:251px;top:456.6px;width:1px;height:172.39999999999998px;background:repeating-linear-gradient(180deg,#d9d9d9 0 1px,transparent 1px 3px)"></div>
<div class="a" style="left:327px;top:456.6px;width:1px;height:172.39999999999998px;background:repeating-linear-gradient(180deg,#d9d9d9 0 1px,transparent 1px 3px)"></div>
<div class="a" style="left:405px;top:456.6px;width:1px;height:172.39999999999998px;background:repeating-linear-gradient(180deg,#d9d9d9 0 1px,transparent 1px 3px)"></div>
<div class="a" style="left:482px;top:456.6px;width:1px;height:172.39999999999998px;background:repeating-linear-gradient(180deg,#d9d9d9 0 1px,transparent 1px 3px)"></div>
<div class="t" style="left:74.0px;top:502.0px;font-size:8.0px;color:#3c3c3c;transform:scaleX(0.8782);transform-origin:0 0;">10K</div>
<div class="t" style="left:78.0px;top:564.0px;font-size:8.0px;color:#3c3c3c;transform:scaleX(0.8676);transform-origin:0 0;">5K</div>
<div class="t" style="left:78.0px;top:625.4px;font-size:8.0px;color:#3c3c3c;transform:scaleX(0.8676);transform-origin:0 0;">0K</div>
<div class="t" style="left:84.8px;top:633.3px;font-size:8.57px;color:#3c3c3c;transform:scaleX(0.8940);transform-origin:0 0;">Jan 2019</div>
<div class="t" style="left:158.9px;top:633.3px;font-size:8.57px;color:#3c3c3c;transform:scaleX(0.8705);transform-origin:0 0;">Mar 2019</div>
<div class="t" style="left:235.5px;top:633.3px;font-size:8.57px;color:#3c3c3c;transform:scaleX(0.8376);transform-origin:0 0;">May 2019</div>
<div class="t" style="left:312.1px;top:633.3px;font-size:8.57px;color:#3c3c3c;transform:scaleX(0.9730);transform-origin:0 0;">Jul 2019</div>
<div class="t" style="left:390.0px;top:633.3px;font-size:8.57px;color:#3c3c3c;transform:scaleX(0.8590);transform-origin:0 0;">Sep 2019</div>
<div class="t" style="left:466.7px;top:633.3px;font-size:8.57px;color:#3c3c3c;transform:scaleX(0.8593);transform-origin:0 0;">Nov 2019</div>
<div class="t" style="left:299.9px;top:642.6px;font-size:11.43px;color:#252423;transform:scaleX(0.8666);transform-origin:0 0;">Year</div>
<div class="t" style="left:60.7px;top:581.0px;font-size:10.0px;color:#252423;transform:rotate(-90deg) scaleX(0.974);transform-origin:0 0;">Sum of Units Sold</div>
<svg style="left:40px;top:170px" width="899" height="498" viewBox="40 170 899 498"><polyline points="100.5,584.3 139.4,588.7 174.6,574.9 213.6,574.0 251.3,578.4 290.2,557.7 327.9,564.4 366.8,546.0 405.8,543.7 443.5,586.5 482.4,606.6 520.1,594.8" fill="none" stroke="#8b3d88" stroke-width="2.0" stroke-linejoin="round" stroke-linecap="round"/><polyline points="100.5,569.6 139.4,579.9 174.6,521.7 213.6,558.6 251.3,547.4 290.2,519.0 327.9,499.3 366.8,528.3 405.8,468.6 443.5,563.8 482.4,594.8 520.1,575.6" fill="none" stroke="#3a9a88" stroke-width="2.0" stroke-linejoin="round" stroke-linecap="round"/><polyline points="100.5,576.0 139.4,577.5 174.6,559.2 213.6,546.0 251.3,532.0 290.2,505.2 327.9,524.5 366.8,503.2 405.8,485.5 443.5,557.0 482.4,603.7 520.1,579.1" fill="none" stroke="#354a85" stroke-width="2.0" stroke-linejoin="round" stroke-linecap="round"/></svg>
<div class="t" style="left:542.7px;top:416.0px;font-size:10.86px;color:#252423;transform:scaleX(1.0282);transform-origin:0 0;">Sum of Units Sold and Count of Order ID by Year, Quarter and Month</div>
<div class="a" style="left:583px;top:468px;width:329px;height:1px;background:repeating-linear-gradient(90deg,#d9d9d9 0 1px,transparent 1px 3px)"></div>
<div class="a" style="left:583px;top:533px;width:329px;height:1px;background:repeating-linear-gradient(90deg,#d9d9d9 0 1px,transparent 1px 3px)"></div>
<div class="a" style="left:583px;top:597px;width:329px;height:1px;background:repeating-linear-gradient(90deg,#d9d9d9 0 1px,transparent 1px 3px)"></div>
<div class="a" style="left:584px;top:436.4px;width:1px;height:191.60000000000002px;background:repeating-linear-gradient(180deg,#d9d9d9 0 1px,transparent 1px 3px)"></div>
<div class="a" style="left:670px;top:436.4px;width:1px;height:191.60000000000002px;background:repeating-linear-gradient(180deg,#d9d9d9 0 1px,transparent 1px 3px)"></div>
<div class="a" style="left:757px;top:436.4px;width:1px;height:191.60000000000002px;background:repeating-linear-gradient(180deg,#d9d9d9 0 1px,transparent 1px 3px)"></div>
<div class="a" style="left:845px;top:436.4px;width:1px;height:191.60000000000002px;background:repeating-linear-gradient(180deg,#d9d9d9 0 1px,transparent 1px 3px)"></div>
<div class="t" style="left:557.5px;top:464.8px;font-size:8.0px;color:#3c3c3c;transform:scaleX(0.8782);transform-origin:0 0;">30K</div>
<div class="t" style="left:557.5px;top:529.8px;font-size:8.0px;color:#3c3c3c;transform:scaleX(0.8782);transform-origin:0 0;">20K</div>
<div class="t" style="left:557.5px;top:594.1px;font-size:8.0px;color:#3c3c3c;transform:scaleX(0.8782);transform-origin:0 0;">10K</div>
<div class="t" style="left:568.5px;top:633.3px;font-size:8.57px;color:#3c3c3c;transform:scaleX(0.8940);transform-origin:0 0;">Jan 2019</div>
<div class="t" style="left:654.4px;top:633.3px;font-size:8.57px;color:#3c3c3c;transform:scaleX(0.9061);transform-origin:0 0;">Apr 2019</div>
<div class="t" style="left:741.3px;top:633.3px;font-size:8.57px;color:#3c3c3c;transform:scaleX(0.9730);transform-origin:0 0;">Jul 2019</div>
<div class="t" style="left:829.2px;top:633.3px;font-size:8.57px;color:#3c3c3c;transform:scaleX(0.9065);transform-origin:0 0;">Oct 2019</div>
<div class="t" style="left:733.7px;top:643.9px;font-size:11.43px;color:#252423;transform:scaleX(0.8666);transform-origin:0 0;">Year</div>
<div class="t" style="left:544.5px;top:571.7px;font-size:10.0px;color:#252423;transform:rotate(-90deg) scaleX(0.974);transform-origin:0 0;">Sum of Units Sold</div>
<svg style="left:40px;top:170px" width="899" height="498" viewBox="40 170 899 498"><polyline points="584.2,579.8 613.8,588.6 640.5,541.8 670.2,553.0 698.8,542.5 728.4,504.0 757.1,505.7 786.7,500.4 816.3,459.3 844.9,567.6 874.5,617.6 903.2,590.2" fill="none" stroke="#354a85" stroke-width="2.1" stroke-linejoin="round" stroke-linecap="round"/></svg>
<div class="a" style="left:54px;top:171px;width:2px;height:489.5px;background:repeating-linear-gradient(180deg,#3a3a3a 0 2px,transparent 2px 4px)"></div>
<div class="a" style="left:923px;top:171px;width:2px;height:489.5px;background:repeating-linear-gradient(180deg,#3a3a3a 0 2px,transparent 2px 4px)"></div>
<div class="a" style="left:54px;top:658px;width:872px;height:2px;background:repeating-linear-gradient(90deg,#3a3a3a 0 2px,transparent 2px 4px)"></div>
<svg style="left:948px;top:182px" width="14" height="14" viewBox="948 182 14 14"><path d="M955.5 185.5l-3.2 3.5 3.2 3.5M959 185.5l-3.2 3.5 3.2 3.5" fill="none" stroke="#222" stroke-width="1.8"/></svg>
<svg style="left:950px;top:210px" width="14" height="14" viewBox="950 210 14 14"><path d="M961.5 213v9M958.5 214.5v6M955.5 216.5v2" stroke="#333" stroke-width="1.1"/></svg>
<div class="t" style="left:962px;top:232px;font-size:15px;letter-spacing:1px;color:#222;transform:rotate(90deg);transform-origin:0 0;">Filters</div>
<div class="a" style="left:40px;top:668px;width:931px;height:35px;background:#2b2b2b;"></div>
<svg style="left:50px;top:672px" width="30" height="28" viewBox="50 672 30 28"><rect x="56.5" y="676.5" width="13" height="10" fill="none" stroke="#e6e6e6" stroke-width="1.1"/><path d="M61 689.5h4M63 687v2.5M59 689.5h8" stroke="#e6e6e6" stroke-width="1.1"/></svg>
<div class="a" style="left:51px;top:696px;width:24px;height:3px;background:#3fae94;border-radius:1.5px"></div>
<svg style="left:98px;top:671px" width="20" height="24" viewBox="98 671 20 24"><rect x="102.5" y="674.5" width="10" height="17.5" rx="2" fill="none" stroke="#e6e6e6" stroke-width="1.1"/><path d="M106 689h3" stroke="#e6e6e6" stroke-width="1"/></svg>
<svg style="left:130px;top:678px" width="36" height="14" viewBox="130 678 36 14"><path d="M139.5 681.5l-4.5 3.5 4.5 3.5z" fill="none" stroke="#d0d0d0" stroke-width="1"/><path d="M156 681.5l4.5 3.5-4.5 3.5z" fill="none" stroke="#d0d0d0" stroke-width="1"/></svg>
<div class="a" style="left:168.6px;top:668px;width:1px;height:35px;background:#454545;"></div>
<div class="a" style="left:244.3px;top:668px;width:1px;height:35px;background:#454545;"></div>
<div class="a" style="left:320.6px;top:668px;width:1px;height:35px;background:#454545;"></div>
<div class="a" style="left:397.5px;top:668px;width:1px;height:35px;background:#454545;"></div>
<div class="a" style="left:473.7px;top:668px;width:1px;height:35px;background:#454545;"></div>
<div class="a" style="left:549.6px;top:668px;width:1px;height:35px;background:#454545;"></div>
<div class="t" style="left:189.5px;top:679.7px;font-size:13.14px;color:#f0f0f0;transform:scaleX(0.8171);transform-origin:0 0;">Page 1</div>
<div class="t" style="left:265.5px;top:679.7px;font-size:13.14px;color:#f0f0f0;transform:scaleX(0.8171);transform-origin:0 0;">Page 2</div>
<div class="t" style="left:342.0px;top:679.7px;font-size:13.14px;color:#f0f0f0;transform:scaleX(0.8171);transform-origin:0 0;">Page 3</div>
<div class="t" style="left:418.5px;top:679.7px;font-size:13.14px;color:#f0f0f0;transform:scaleX(0.8171);transform-origin:0 0;">Page 4</div>
<div class="t" style="left:494.5px;top:679.7px;font-size:13.14px;color:#f0f0f0;transform:scaleX(0.8171);transform-origin:0 0;">Page 5</div>
<div class="t" style="left:571.0px;top:679.7px;font-size:13.14px;color:#f0f0f0;transform:scaleX(0.8171);transform-origin:0 0;">Page 6</div>
<div class="a" style="left:321px;top:699px;width:76.5px;height:4px;background:#3fae94;"></div>
<svg style="left:385px;top:672px" width="12" height="12" viewBox="385 672 12 12"><path d="M387.5 674.5l5.5 5.5M393 674.5l-5.5 5.5" stroke="#f0f0f0" stroke-width="1.6"/></svg>
<div class="a" style="left:626px;top:668px;width:38.7px;height:35px;background:#2aa88f;"></div>
<svg style="left:638px;top:677px" width="16" height="16" viewBox="638 677 16 16"><path d="M645.5 679v11M640 684.5h11" stroke="#12332c" stroke-width="2.6"/></svg>
<div class="a" style="left:971px;top:170px;width:181px;height:533px;background:#151515;"></div>
<div class="a" style="left:971px;top:170px;width:1px;height:533px;background:#4a4a4a;"></div>
<div class="a" style="left:1152px;top:170px;width:1px;height:533px;background:#5a5a5a;"></div>
<div class="a" style="left:1153px;top:170px;width:180px;height:533px;background:#151515;"></div>
<div class="a" style="left:1333px;top:170px;width:1px;height:533px;background:#5a5a5a;"></div>
<div class="a" style="left:1334px;top:170px;width:32px;height:533px;background:#2b2b2b;"></div>
<div class="a" style="left:0px;top:170px;width:40px;height:533px;background:#141414;"></div>
<div class="t" style="left:980.5px;top:182.2px;font-size:15.71px;font-weight:700;color:#ffffff;transform:scaleX(0.9117);transform-origin:0 0;">Build</div>
<div class="a" style="left:1111px;top:187.3px;width:2.2px;height:2.2px;background:#e6e6e6;border-radius:50%"></div>
<div class="a" style="left:1115px;top:187.3px;width:2.2px;height:2.2px;background:#e6e6e6;border-radius:50%"></div>
<div class="a" style="left:1119px;top:187.3px;width:2.2px;height:2.2px;background:#e6e6e6;border-radius:50%"></div>
<svg style="left:1132px;top:182px" width="14" height="14" viewBox="1132 182 14 14"><path d="M1134.5 184.5l3.5 3.8-3.5 3.8M1138.5 184.5l3.5 3.8-3.5 3.8" fill="none" stroke="#e6e6e6" stroke-width="1.1"/></svg>
<div class="t" style="left:980.5px;top:209.5px;font-size:12.14px;color:#ececec;transform:scaleX(0.9393);transform-origin:0 0;">Suggestions</div>
<div class="a" style="left:980.5px;top:226.7px;width:163px;height:212.8px;background:#050505;border:1px solid #6e6e6e;border-radius:2px"></div>
<svg style="left:980px;top:227px" width="164" height="213" viewBox="980 227 164 213"><path d="M988.6 233.9v16.5h17" fill="none" stroke="#dcdcdc" stroke-width="1.1"/><rect x="991.6" y="236.4" width="9" height="4" fill="#2d7fd2" stroke="#dcdcdc" stroke-width=".8"/><rect x="991.6" y="243.4" width="12" height="4" fill="#8a8a8a" stroke="#dcdcdc" stroke-width=".8"/><path d="M1014.58 233.9v16.5h17" fill="none" stroke="#dcdcdc" stroke-width="1.1"/><rect x="1017.58" y="239.4" width="4" height="11" fill="#2d7fd2" stroke="#dcdcdc" stroke-width=".8"/><rect x="1024.58" y="235.4" width="4" height="15" fill="#8a8a8a" stroke="#dcdcdc" stroke-width=".8"/><path d="M1040.56 233.9v16.5h17" fill="none" stroke="#8a8a8a" stroke-width="1.1"/><rect x="1042.56" y="235.4" width="14" height="3.5" fill="#2d7fd2"/><rect x="1042.56" y="240.4" width="10" height="3" fill="none" stroke="#8a8a8a" stroke-width="1"/><rect x="1042.56" y="245.4" width="7" height="3" fill="#8a8a8a"/><path d="M1066.54 233.9v16.5h17" fill="none" stroke="#8a8a8a" stroke-width="1.1"/><rect x="1068.54" y="235.4" width="4" height="15" fill="#2d7fd2"/><rect x="1073.54" y="241.4" width="3" height="9" fill="#8a8a8a"/><rect x="1077.54" y="238.4" width="3" height="12" fill="#8a8a8a"/><path d="M1092.52 233.9v16.5h17" fill="none" stroke="#dcdcdc" stroke-width="1.1"/><rect x="1095.52" y="236.4" width="12" height="4" fill="#2d7fd2" stroke="#dcdcdc" stroke-width=".8"/><rect x="1095.52" y="243.4" width="12" height="4" fill="#8a8a8a" stroke="#dcdcdc" stroke-width=".8"/><path d="M1118.5 233.9v16.5h17" fill="none" stroke="#dcdcdc" stroke-width="1.1"/><rect x="1121.5" y="235.4" width="4" height="15" fill="#2d7fd2" stroke="#dcdcdc" stroke-width=".8"/><rect x="1128.5" y="235.4" width="4" height="15" fill="#8a8a8a" stroke="#dcdcdc" stroke-width=".8"/><path d="M988.6 259.8v16.5h17" fill="none" stroke="#dcdcdc" stroke-width="1.1"/><path d="M989.6 270.3l5-5 3 3 7-6" fill="none" stroke="#dcdcdc" stroke-width="1"/><path d="M989.6 273.3l5-5 3 3 7-6" fill="none" stroke="#4f93d1" stroke-width="1"/><path d="M1013.58 276.3l6-14 4 6 4-6 5 14z" fill="none" stroke="#dcdcdc" stroke-width="1"/><path d="M1023.58 262.3l4-2 4 16h-4z" fill="#8a8a8a"/><path d="M1013.58 276.3l5-6 4 3 4-5 5 8z" fill="#2d7fd2"/><path d="M1040.56 259.8v16.5h17" fill="none" stroke="#dcdcdc" stroke-width="1.1"/><path d="M1041.56 263.3l5 5 4-3 5 4 2-5v8l-2 3-5-4-4 3-5-5z" fill="#2d7fd2" stroke="#dcdcdc" stroke-width=".8"/><path d="M1066.54 259.8v16.5h17" fill="none" stroke="#dcdcdc" stroke-width="1.1"/><path d="M1067.54 261.3h15v5l-5 5-4-3-6 3z" fill="#2d7fd2" stroke="#dcdcdc" stroke-width=".8"/><path d="M1092.52 259.8v16.5h17" fill="none" stroke="#dcdcdc" stroke-width="1.1"/><rect x="1095.52" y="262.3" width="4" height="14" fill="#2d7fd2"/><rect x="1101.52" y="262.3" width="4" height="14" fill="#8a8a8a"/><path d="M1093.52 273.3l5-5 4 3 6-6" fill="none" stroke="#dcdcdc" stroke-width="1"/><path d="M1118.5 259.8v16.5h17" fill="none" stroke="#dcdcdc" stroke-width="1.1"/><rect x="1121.5" y="266.3" width="4" height="10" fill="#2d7fd2"/><rect x="1126.5" y="260.3" width="4" height="16" fill="none" stroke="#dcdcdc" stroke-width="1"/><rect x="1130.5" y="264.3" width="4" height="12" fill="#8a8a8a"/><path d="M1119.5 273.3l5-5 4 3 6-6" fill="none" stroke="#dcdcdc" stroke-width="1"/><path d="M988.6 285.7v16.5h17" fill="none" stroke="#dcdcdc" stroke-width="1.1"/><path d="M989.6 288.2c4 0 5 5 8 5s4-4 7-4v5c-3 0-4 4-7 4s-4-4-8-4z" fill="#2d7fd2"/><path d="M989.6 296.2c4 0 5 4 8 4s4-3 7-3v4h-15z" fill="#e8892a"/><path d="M1014.58 285.7v16.5h17" fill="none" stroke="#dcdcdc" stroke-width="1.1"/><path d="M1017.58 302.2v-10h3v10M1020.58 292.2v-4h3v14M1023.58 288.2v-2h3v16M1026.58 286.2h3v16" fill="none" stroke="#dcdcdc" stroke-width="1"/><rect x="1040.56" y="286.2" width="16" height="4" fill="#2d7fd2"/><rect x="1042.56" y="291.2" width="12" height="4" fill="#2d7fd2"/><rect x="1045.06" y="296.2" width="7" height="6" fill="#2d7fd2"/><path d="M1066.54 285.7v16.5h17" fill="none" stroke="#dcdcdc" stroke-width="1.1"/><rect x="1078.54" y="287.2" width="3" height="3" fill="#dcdcdc"/><rect x="1071.54" y="292.2" width="2.5" height="2.5" fill="#2d7fd2"/><rect x="1075.54" y="295.2" width="3" height="3" fill="#2d7fd2"/><rect x="1068.54" y="298.2" width="2.5" height="2.5" fill="#dcdcdc"/><rect x="1078.54" y="298.2" width="2.5" height="2.5" fill="#2d7fd2"/><circle cx="1100.52" cy="294.2" r="8" fill="none" stroke="#dcdcdc" stroke-width="1.1"/><path d="M1100.52 286.7A7.5 7.5 0 0 1 1105.82 299.5L1100.52 294.2z" fill="#2d7fd2"/><circle cx="1126.5" cy="294.2" r="6.3" fill="none" stroke="#2d7fd2" stroke-width="3.4"/><circle cx="1126.5" cy="294.2" r="8" fill="none" stroke="#dcdcdc" stroke-width=".7"/><circle cx="1126.5" cy="294.2" r="4.4" fill="none" stroke="#dcdcdc" stroke-width=".7"/><path d="M1118.5 294.2h3.5" stroke="#050505" stroke-width="1.2"/><rect x="988.6" y="312.1" width="16" height="16" fill="none" stroke="#dcdcdc" stroke-width="1.1"/><rect x="989.1" y="312.6" width="7" height="7" fill="#2d7fd2"/><rect x="989.1" y="320.6" width="7" height="7" fill="#2d7fd2"/><path d="M996.6 312.1v16M996.6 318.1h8M996.6 323.1h8M1000.6 323.1v5" stroke="#dcdcdc" stroke-width="1"/><circle cx="1023.58" cy="319.1" r="5.5" fill="#0a0a0a" stroke="#dcdcdc" stroke-width="1"/><path d="M1020.58 316.1l3 1 1 2-2 2 1 2-2 1-2-2z M1024.58 315.1l3 2-1 2z" fill="#4aa060"/><path d="M1016.58 314.1a8 8 0 0 0 8 12M1023.58 325.1v3M1019.58 328.1h8" fill="none" stroke="#dcdcdc" stroke-width="1"/><path d="M1040.56 314.1l5-2 4 2 3-3 4 2v6l-3 5-5 2-5-1-3-4z" fill="#8a8a8a" stroke="#dcdcdc" stroke-width=".8"/><path d="M1048.56 317.1l4-2 3 1v5l-3 4-4 1z" fill="#2d7fd2"/><path d="M1066.54 314.1l5-2 4 2 3-3 4 2v6l-3 5-5 2-5-1-3-4z" fill="none" stroke="#dcdcdc" stroke-width="1"/><path d="M1072.54 315.1v6l5 2M1068.54 320.1h4" fill="none" stroke="#4f93d1" stroke-width="1"/><path d="M1102.52 311.1l6 17-6-4-8 4z" fill="#2d7fd2"/><path d="M1102.52 311.1l-8 17 8-4z" fill="#4f93d1"/><path d="M1118.5 324.1a8 8 0 0 1 16 0" fill="none" stroke="#dcdcdc" stroke-width="2.2"/><path d="M1127.5 316.3a8 8 0 0 1 7 7.8" fill="none" stroke="#4f93d1" stroke-width="2.2"/><path d="M1126.5 324.1l3-5" stroke="#dcdcdc" stroke-width="1.2"/><rect x="988.1" y="339.0" width="17" height="13" fill="none" stroke="#dcdcdc" stroke-width="1.1"/><path d="M990.6 350.0h12" stroke="#dcdcdc" stroke-width="1"/><text x="996.6" y="347.5" font-family="Liberation Sans" font-size="6.5" fill="#8fb4dc" text-anchor="middle">123</text><rect x="1014.58" y="338.0" width="16" height="16" fill="none" stroke="#dcdcdc" stroke-width="1.1"/><path d="M1017.58 341.0v10M1019.58 342.0h8M1019.58 345.0h5M1019.58 348.0h7" stroke="#dcdcdc" stroke-width="1.2"/><rect x="1040.06" y="339.0" width="17" height="13" fill="none" stroke="#dcdcdc" stroke-width="1.1"/><path d="M1042.56 348.0l3-5 3 5z" fill="#4cae50"/><path d="M1048.56 343.0h6l-3 5z" fill="#d04040"/><path d="M1042.56 350.0h12" stroke="#dcdcdc" stroke-width="1"/><rect x="1066.54" y="338.0" width="16" height="16" fill="none" stroke="#dcdcdc" stroke-width="1.1"/><path d="M1066.54 341.0h16" stroke="#dcdcdc" stroke-width="1"/><rect x="1069.54" y="344.0" width="3" height="3" fill="none" stroke="#dcdcdc" stroke-width=".8"/><path d="M1074.54 345.0h8l-3 4v5h-2v-5z" fill="#050505" stroke="#dcdcdc" stroke-width="1"/><rect x="1092.52" y="338.0" width="16" height="16" fill="none" stroke="#dcdcdc" stroke-width="1.1"/><path d="M1092.52 341.5h16M1092.52 345.5h16M1092.52 349.5h16M1097.52 341.5v12.5M1103.02 341.5v12.5" stroke="#dcdcdc" stroke-width="1"/><rect x="1118.5" y="338.0" width="16" height="16" fill="#2d7fd2" stroke="#dcdcdc" stroke-width="1.1"/><path d="M1118.5 341.5h16M1118.5 345.5h16M1118.5 349.5h16M1123.5 341.5v12.5M1129.0 341.5v12.5" stroke="#050505" stroke-width="1"/><rect x="1118.5" y="338.0" width="16" height="3.5" fill="#dcdcdc"/><text x="996.6" y="377.4" font-family="Liberation Sans" font-size="15" fill="#4f93d1" text-anchor="middle">R</text><text x="1022.58" y="376.9" font-family="Liberation Sans" font-size="15" fill="#4f93d1" text-anchor="middle">Py</text><path d="M1040.56 363.4v16.5h17" fill="none" stroke="#dcdcdc" stroke-width="1.1"/><path d="M1043.56 367.9h7M1043.56 371.9h4M1043.56 375.9h6" stroke="#dcdcdc" stroke-width="1"/><circle cx="1053.56" cy="366.9" r="2" fill="#4f93d1"/><circle cx="1051.56" cy="374.9" r="1.6" fill="#4f93d1"/><rect x="1066.54" y="369.9" width="5" height="4" fill="#2d7fd2"/><rect x="1077.54" y="364.9" width="5" height="4" fill="#2d7fd2"/><rect x="1077.54" y="369.9" width="5" height="4" fill="#2d7fd2"/><rect x="1077.54" y="374.9" width="5" height="4" fill="#2d7fd2"/><path d="M1071.54 371.9h3M1074.54 366.9v10M1074.54 366.9h3M1074.54 376.9h3" stroke="#dcdcdc" stroke-width="1"/><path d="M1092.52 364.9h16v11h-9l-4 4v-4h-3z" fill="none" stroke="#dcdcdc" stroke-width="1.1"/><path d="M1120.5 363.9h8l4 4v12h-12z" fill="none" stroke="#dcdcdc" stroke-width="1.1"/><path d="M1123.5 371.9h5M1123.5 374.9h5" stroke="#4f93d1" stroke-width="1"/><circle cx="1122.5" cy="368.9" r="1" fill="#4f93d1"/><path d="M991.6 389.79999999999995h10v5a5 5 0 0 1-10 0z" fill="none" stroke="#dcdcdc" stroke-width="1.1"/><path d="M991.6 391.79999999999995h-3c0 3 2 4 3 4M1001.6 391.79999999999995h3c0 3-2 4-3 4M996.6 399.79999999999995v4M992.6 404.79999999999995h8" fill="none" stroke="#dcdcdc" stroke-width="1.1"/><path d="M1016.58 389.79999999999995h8l4 4v12h-12z" fill="none" stroke="#dcdcdc" stroke-width="1.1"/><path d="M1019.58 403.79999999999995v-3M1022.58 403.79999999999995v-6M1025.58 403.79999999999995v-4" stroke="#dcdcdc" stroke-width="1.3"/><path d="M1045.56 388.79999999999995h5l-3 5h3l-6 7 1.5-5h-3z" fill="#f0a830" stroke="#050505" stroke-width=".6"/><rect x="1042.56" y="392.79999999999995" width="14" height="12" fill="none" stroke="#dcdcdc" stroke-width="1.1"/><text x="1050.06" y="401.79999999999995" font-family="Liberation Sans" font-size="6.5" fill="#8fb4dc" text-anchor="middle">123</text><rect x="1068.54" y="391.79999999999995" width="6" height="6" fill="none" stroke="#dcdcdc" stroke-width="1"/><rect x="1068.54" y="398.79999999999995" width="6" height="6" fill="none" stroke="#dcdcdc" stroke-width="1"/><path d="M1074.54 396.79999999999995h8l-3 4v5h-2v-5z" fill="#050505" stroke="#dcdcdc" stroke-width="1"/><path d="M1071.54 388.79999999999995h5l-3 5h3l-6 7 1.5-5h-3z" fill="#f0a830" stroke="#050505" stroke-width=".6"/><rect x="1094.52" y="391.79999999999995" width="13" height="13" fill="none" stroke="#dcdcdc" stroke-width="1"/><path d="M1096.52 401.79999999999995l3-8 3 8" fill="none" stroke="#4f93d1" stroke-width="1"/><path d="M1100.52 396.79999999999995h8l-3 4v5h-2v-5z" fill="#050505" stroke="#dcdcdc" stroke-width="1"/><path d="M1097.52 388.79999999999995h5l-3 5h3l-6 7 1.5-5h-3z" fill="#f0a830" stroke="#050505" stroke-width=".6"/><rect x="1120.5" y="391.79999999999995" width="13" height="13" fill="none" stroke="#dcdcdc" stroke-width="1"/><path d="M1122.5 395.79999999999995h7M1122.5 399.79999999999995h3" stroke="#dcdcdc" stroke-width="1"/><path d="M1126.5 396.79999999999995h8l-3 4v5h-2v-5z" fill="#050505" stroke="#dcdcdc" stroke-width="1"/><path d="M1123.5 388.79999999999995h5l-3 5h3l-6 7 1.5-5h-3z" fill="#f0a830" stroke="#050505" stroke-width=".6"/><path d="M989.6 418.7h14v14h-14z" fill="none" stroke="#4f93d1" stroke-width="1.1"/><path d="M989.6 432.7v-5l4-1 2-4 4 1 2-3h2v4l-3 3-2 4z" fill="#2d7fd2"/><path d="M990.6 414.7a3 3 0 0 1 3 3c0 2-3 5-3 5s-3-3-3-5a3 3 0 0 1 3-3z" fill="#e8892a"/><circle cx="1002.6" cy="430.7" r="2.3" fill="#e8892a"/><circle cx="1004.6" cy="426.7" r="1.3" fill="#e8892a"/><path d="M1022.58 415.7l8 8-8 8-8-8z M1018.58 419.7l8 8M1026.58 419.7l-8 8" fill="none" stroke="#9a4fc8" stroke-width="1.2"/><path d="M1040.56 417.7h7l7 6-7 6h-7l7-6z" fill="none" stroke="#4f93d1" stroke-width="1.1"/><path d="M1047.56 417.7h3l7 6-7 6h-3" fill="none" stroke="#2d7fd2" stroke-width="1.1"/><circle cx="1070.54" cy="423.7" r="1.1" fill="#dcdcdc"/><circle cx="1074.54" cy="423.7" r="1.1" fill="#dcdcdc"/><circle cx="1078.54" cy="423.7" r="1.1" fill="#dcdcdc"/></svg>
<div class="t" style="left:980.6px;top:450.6px;font-size:11.14px;color:#ececec;transform:scaleX(0.9702);transform-origin:0 0;">Data</div>
<div class="a" style="left:980.5px;top:467px;width:163px;height:39.6px;background:transparent;border:1px dashed #8a8a8a;border-radius:2px"></div>
<div class="a" style="left:985.2px;top:471.6px;width:153.7px;height:30px;background:#2b2b2b;border:1px solid #a8a8a8;border-radius:2px"></div>
<div class="t" style="left:1035.3px;top:481.2px;font-size:12.14px;color:#f0f0f0;transform:scaleX(0.9726);transform-origin:0 0;">+Add data</div>
<div class="t" style="left:1161.3px;top:182.0px;font-size:15.29px;font-weight:700;color:#ffffff;transform:scaleX(0.9721);transform-origin:0 0;">Data</div>
<div class="a" style="left:1292px;top:187.3px;width:2.2px;height:2.2px;background:#e6e6e6;border-radius:50%"></div>
<div class="a" style="left:1296px;top:187.3px;width:2.2px;height:2.2px;background:#e6e6e6;border-radius:50%"></div>
<div class="a" style="left:1300px;top:187.3px;width:2.2px;height:2.2px;background:#e6e6e6;border-radius:50%"></div>
<svg style="left:1313px;top:182px" width="14" height="14" viewBox="1313 182 14 14"><path d="M1315.5 184.5l3.5 3.8-3.5 3.8M1319.5 184.5l3.5 3.8-3.5 3.8" fill="none" stroke="#e6e6e6" stroke-width="1.1"/></svg>
<div class="a" style="left:1157.5px;top:215px;width:171.3px;height:24.2px;background:#1f1f1f;border:1px solid #6a6a6a;border-radius:4px"></div>
<svg style="left:1167px;top:218px" width="20" height="18" viewBox="1167 218 20 18"><circle cx="1175.5" cy="225.3" r="4.8" fill="none" stroke="#b8b8b8" stroke-width="1.2"/><path d="M1179 228.8l4.3 4.3" stroke="#b8b8b8" stroke-width="1.3"/></svg>
<div class="t" style="left:1191.5px;top:221.2px;font-size:13.43px;color:#a8a8a8;transform:scaleX(0.9052);transform-origin:0 0;">Search</div>
<div class="t" style="left:1200.6px;top:254.2px;font-size:12.29px;color:#ececec;transform:scaleX(0.9349);transform-origin:0 0;">Calendar</div>
<div class="t" style="left:1200.6px;top:278.2px;font-size:12.29px;color:#ececec;transform:scaleX(0.9331);transform-origin:0 0;">dCategories</div>
<div class="t" style="left:1200.6px;top:302.2px;font-size:12.29px;color:#ececec;transform:scaleX(0.9042);transform-origin:0 0;">dProducts</div>
<div class="t" style="left:1200.6px;top:326.2px;font-size:12.29px;color:#ececec;transform:scaleX(0.8681);transform-origin:0 0;">dSalesReps</div>
<div class="t" style="left:1200.6px;top:350.2px;font-size:12.29px;color:#ececec;transform:scaleX(0.9257);transform-origin:0 0;">dStore</div>
<div class="t" style="left:1200.6px;top:374.2px;font-size:12.29px;color:#ececec;transform:scaleX(0.8641);transform-origin:0 0;">fSales</div>
<div class="t" style="left:1200.6px;top:398.2px;font-size:12.29px;color:#ececec;transform:scaleX(0.8544);transform-origin:0 0;">new-products</div>
<div class="t" style="left:1200.6px;top:422.2px;font-size:12.29px;color:#ececec;transform:scaleX(0.9455);transform-origin:0 0;">ProductCosts</div>
<svg style="left:1165px;top:245px" width="35" height="195" viewBox="1165 245 35 195"><path d="M1170 256.7l3.5 3.5-3.5 3.5" fill="none" stroke="#d8d8d8" stroke-width="1.1"/><rect x="1182.5" y="254.2" width="10" height="11" rx="1.5" fill="none" stroke="#dcdcdc" stroke-width="1.1"/><path d="M1182.5 257.7h10M1186 254.2v11" stroke="#dcdcdc" stroke-width="1"/><rect x="1187.5" y="259.2" width="7" height="7" fill="#151515" stroke="#dcdcdc" stroke-width="1"/><path d="M1189.5 261.2h3M1189.5 263.7h3" stroke="#dcdcdc" stroke-width="0.9"/><path d="M1170 280.7l3.5 3.5-3.5 3.5" fill="none" stroke="#d8d8d8" stroke-width="1.1"/><rect x="1182.5" y="278.5" width="11.5" height="11.5" rx="2.5" fill="none" stroke="#dcdcdc" stroke-width="1.2"/><path d="M1182.5 282.3h11.5M1182.5 286.09999999999997h11.5M1186.3 278.5v11.5M1190.2 278.5v11.5" stroke="#dcdcdc" stroke-width="1"/><path d="M1170 304.7l3.5 3.5-3.5 3.5" fill="none" stroke="#d8d8d8" stroke-width="1.1"/><rect x="1182.5" y="302.5" width="11.5" height="11.5" rx="2.5" fill="none" stroke="#dcdcdc" stroke-width="1.2"/><path d="M1182.5 306.3h11.5M1182.5 310.09999999999997h11.5M1186.3 302.5v11.5M1190.2 302.5v11.5" stroke="#dcdcdc" stroke-width="1"/><path d="M1170 328.7l3.5 3.5-3.5 3.5" fill="none" stroke="#d8d8d8" stroke-width="1.1"/><rect x="1182.5" y="326.5" width="11.5" height="11.5" rx="2.5" fill="none" stroke="#dcdcdc" stroke-width="1.2"/><path d="M1182.5 330.3h11.5M1182.5 334.09999999999997h11.5M1186.3 326.5v11.5M1190.2 326.5v11.5" stroke="#dcdcdc" stroke-width="1"/><path d="M1170 352.7l3.5 3.5-3.5 3.5" fill="none" stroke="#d8d8d8" stroke-width="1.1"/><rect x="1182.5" y="350.5" width="11.5" height="11.5" rx="2.5" fill="none" stroke="#dcdcdc" stroke-width="1.2"/><path d="M1182.5 354.3h11.5M1182.5 358.09999999999997h11.5M1186.3 350.5v11.5M1190.2 350.5v11.5" stroke="#dcdcdc" stroke-width="1"/><path d="M1170 376.7l3.5 3.5-3.5 3.5" fill="none" stroke="#d8d8d8" stroke-width="1.1"/><rect x="1182.5" y="374.5" width="11.5" height="11.5" rx="2.5" fill="none" stroke="#dcdcdc" stroke-width="1.2"/><path d="M1182.5 378.3h11.5M1182.5 382.09999999999997h11.5M1186.3 374.5v11.5M1190.2 374.5v11.5" stroke="#dcdcdc" stroke-width="1"/><path d="M1170 400.7l3.5 3.5-3.5 3.5" fill="none" stroke="#d8d8d8" stroke-width="1.1"/><rect x="1182.5" y="398.5" width="11.5" height="11.5" rx="2.5" fill="none" stroke="#dcdcdc" stroke-width="1.2"/><path d="M1182.5 402.3h11.5M1182.5 406.09999999999997h11.5M1186.3 398.5v11.5M1190.2 398.5v11.5" stroke="#dcdcdc" stroke-width="1"/><path d="M1170 424.7l3.5 3.5-3.5 3.5" fill="none" stroke="#d8d8d8" stroke-width="1.1"/><rect x="1182.5" y="422.5" width="11.5" height="11.5" rx="2.5" fill="none" stroke="#dcdcdc" stroke-width="1.2"/><path d="M1182.5 426.3h11.5M1182.5 430.09999999999997h11.5M1186.3 422.5v11.5M1190.2 422.5v11.5" stroke="#dcdcdc" stroke-width="1"/></svg>
<div class="a" style="left:1334px;top:170.8px;width:32px;height:30.4px;background:#3a3a3a;border:1px solid #505050;border-right:none"></div>
<div class="a" style="left:1334px;top:203.2px;width:32px;height:30.1px;background:#3a3a3a;border:1px solid #505050;border-right:none"></div>
<svg style="left:1336px;top:172px" width="30" height="190" viewBox="1336 172 30 190"><ellipse cx="1350" cy="181" rx="7" ry="2.5" fill="none" stroke="#e0e0e0" stroke-width="1.2"/><path d="M1343 181v11.5c0 1.5 3 2.5 7 2.5s7-1 7-2.5V181" fill="none" stroke="#e0e0e0" stroke-width="1.2"/>
<path d="M1341.5 226v-10h4v10M1345.5 226v-16h4.5v7" fill="none" stroke="#e0e0e0" stroke-width="1.1"/><path d="M1341.5 226h7" stroke="#e0e0e0" stroke-width="1.1"/><rect x="1350.5" y="215.5" width="7" height="11" rx="2.5" fill="none" stroke="#e8a550" stroke-width="1.2"/><path d="M1350.5 218.5c1.5 1 5.5 1 7 0" fill="none" stroke="#e8a550" stroke-width="1"/>
<path d="M1342.5 255v-8h3.5v-5.5h5v7M1342.5 255h5.5M1346 247v8" fill="none" stroke="#e0e0e0" stroke-width="1.1"/><path d="M1351 249v-3h3v1" fill="none" stroke="#e0e0e0" stroke-width="1.1"/>
<path d="M1353.5 252l4.5-5 1.5 1.5-4.5 5z" fill="#e0e0e0"/><path d="M1346 259.5c.5-3 2.5-6 6-6.5l2 2c-.5 3.5-3.5 5-8 4.5z" fill="#4f93d1"/>
<path d="M1349.5 276.5a5.5 5.5 0 0 0-9.5 1M1340.5 283a5.5 5.5 0 0 0 9 1.5" fill="none" stroke="#5cc06e" stroke-width="1.4"/><path d="M1350 273v4h-4M1340 286.5v-4h4" fill="none" stroke="#5cc06e" stroke-width="1.3"/>
<path d="M1348 277.5h9v5M1344 285v6h7M1350 280h5M1350 282.5h3" fill="none" stroke="#e0e0e0" stroke-width="1.1"/><path d="M1351.5 284h9l-3.5 4v4.5h-2v-4.5z" fill="#2b2b2b" stroke="#e0e0e0" stroke-width="1.1"/>
<rect x="1348" y="305" width="10" height="10" fill="#e8a030"/><rect x="1342.5" y="312.5" width="10" height="9" fill="#2b2b2b" stroke="#e0e0e0" stroke-width="1.1"/><path d="M1350 311l6 7-3 .5 2 3.5-1.5 1-2-3.5-2 2z" fill="#2b2b2b" stroke="#e0e0e0" stroke-width="1"/>
<path d="M1350 336v17M1341.5 344.5h17" stroke="#e0e0e0" stroke-width="1.3"/></svg>
<div class="a" style="left:1334px;top:671px;width:32px;height:1px;background:#505050;"></div>
<svg style="left:1339px;top:677px" width="22" height="22" viewBox="1339 677 22 22"><path d="M1350 679.5l2 .3.8 2 1.8.9 1.8-1 1.6 1.6-1 1.8.7 1.9 2 .6v2.3l-2 .6-.7 1.9 1 1.8-1.6 1.6-1.8-1-1.8.9-.8 2h-2.3l-.6-2-1.9-.8-1.8 1-1.6-1.6 1-1.8-.8-1.9-2-.6v-2.3l2-.6.8-1.9-1-1.8 1.6-1.6 1.8 1 1.9-.9.6-2z" fill="none" stroke="#e0e0e0" stroke-width="1.1"/><circle cx="1350" cy="688.5" r="2.8" fill="none" stroke="#e0e0e0" stroke-width="1.1"/></svg>
<div class="a" style="left:1193px;top:709.5px;width:5px;height:1.5px;background:#bdbdbd;"></div>
<div class="a" style="left:1293px;top:709.5px;width:3px;height:1.5px;background:#bdbdbd;"></div>
<div class="a" style="left:1298px;top:709.5px;width:3px;height:1.5px;background:#bdbdbd;"></div>
<div class="a" style="left:1303px;top:709.5px;width:3px;height:1.5px;background:#bdbdbd;"></div>
<div class="a" style="left:1309px;top:709.5px;width:3px;height:1.5px;background:#bdbdbd;"></div>
<div class="a" style="left:0px;top:170px;width:3px;height:40px;background:#3fae94;"></div>
<svg style="left:8px;top:176px" width="26" height="190" viewBox="8 176 26 190"><path d="M14.5 183v14h13" fill="none" stroke="#e8e8e8" stroke-width="1.1"/><rect x="16.5" y="186.5" width="2.5" height="9" fill="none" stroke="#e8e8e8" stroke-width="1"/><rect x="20.5" y="189.5" width="2.5" height="6" fill="none" stroke="#e8e8e8" stroke-width="1"/><rect x="24.5" y="184.5" width="2.5" height="11" fill="none" stroke="#e8e8e8" stroke-width="1"/>
<rect x="13.5" y="222.5" width="15" height="14" fill="none" stroke="#e0e0e0" stroke-width="1.1"/><path d="M13.5 226h15M13.5 229.5h15M13.5 233h15M18.5 222.5v14M23.5 222.5v14" stroke="#e0e0e0" stroke-width="1"/>
<rect x="12.5" y="266.5" width="7" height="7" fill="none" stroke="#e0e0e0" stroke-width="1.1"/><path d="M12.5 270h7" stroke="#e0e0e0" stroke-width="1"/><rect x="22.5" y="261.5" width="7" height="7" fill="none" stroke="#e0e0e0" stroke-width="1.1"/><path d="M22.5 265h7" stroke="#e0e0e0" stroke-width="1"/><rect x="22.5" y="271.5" width="7" height="7" fill="none" stroke="#e0e0e0" stroke-width="1.1"/><path d="M22.5 275h7" stroke="#e0e0e0" stroke-width="1"/><path d="M19.5 270h1.5M21 265v10M21 265h1.5M21 275h1.5" fill="none" stroke="#e0e0e0" stroke-width="1"/>
<path d="M15 313v-10.5h7.5l4.5 4.5v9" fill="none" stroke="#e0e0e0" stroke-width="1.1"/><path d="M22.5 302.5v4.5h4.5" fill="none" stroke="#e0e0e0" stroke-width="1"/><path d="M27 310c0 3-1 5-2.5 7" fill="none" stroke="#e0e0e0" stroke-width="1"/>
<path d="M15 353v-10.5h7.5l4.5 4.5v6" fill="none" stroke="#e0e0e0" stroke-width="1.1"/><path d="M22.5 342.5v4.5h4.5" fill="none" stroke="#e0e0e0" stroke-width="1"/></svg>
<div class="t" style="left:10.8px;top:312px;font-size:7px;font-weight:700;color:#e8e8e8">DAX</div>
<div class="t" style="left:11px;top:351.5px;font-size:7px;font-weight:700;color:#e8e8e8;transform:scaleX(.95);transform-origin:0 0">TMDL</div>
</body></html>
